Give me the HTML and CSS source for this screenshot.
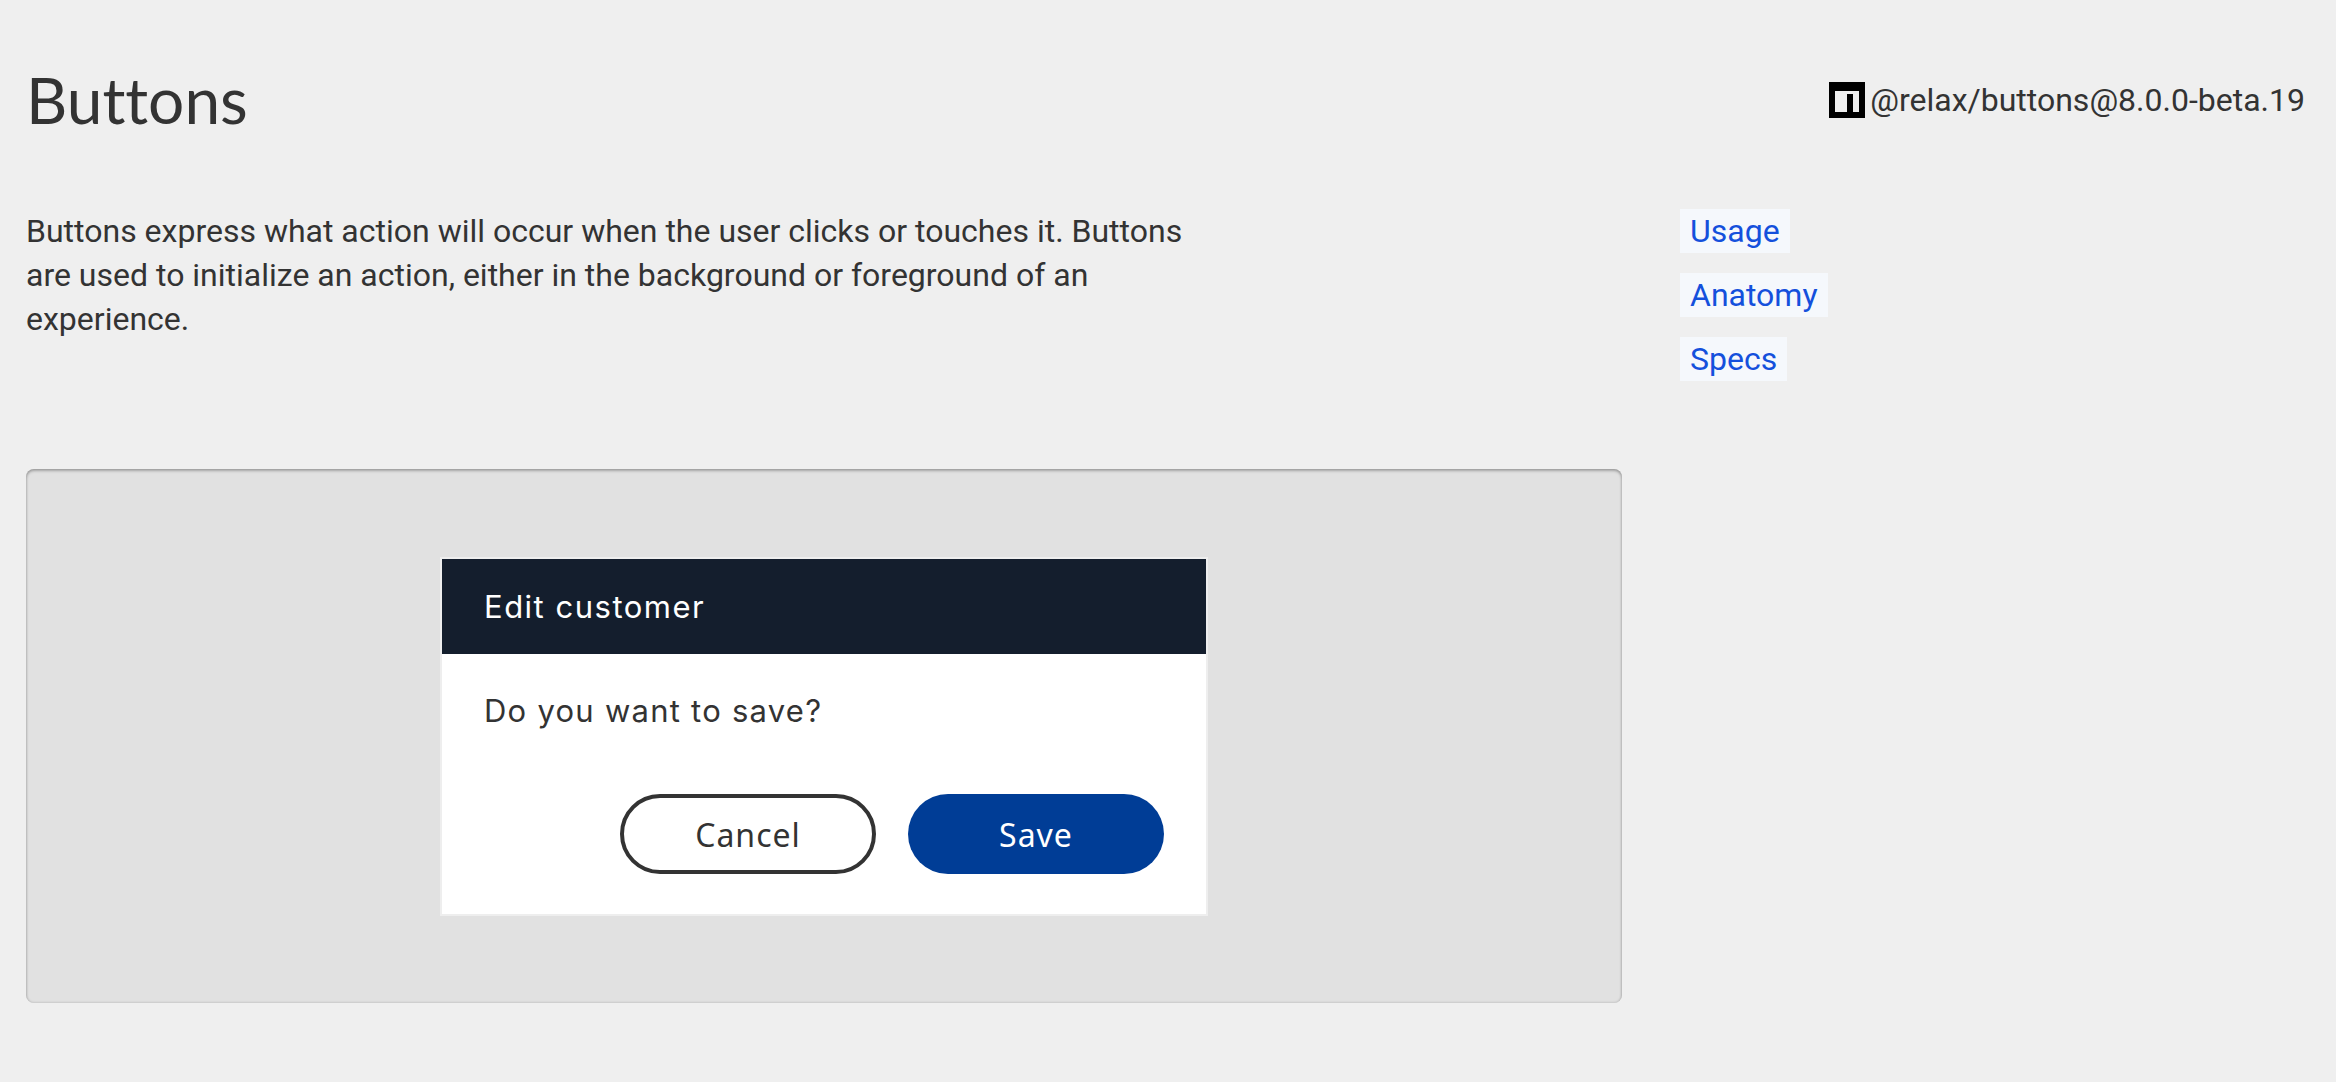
FILE: index.html
```html
<!DOCTYPE html>
<html lang="en">
<head>
<meta charset="utf-8">
<title>Buttons</title>
<link rel="stylesheet" href="styles.css">
</head>
<body>
<div class="page">
  <header class="head">
    <h1 class="title">Buttons</h1>
    <div class="pkg">
      <svg class="npm" width="36" height="36" viewBox="0 0 36 36" aria-hidden="true"><path fill-rule="evenodd" d="M0 0H36V36H0ZM6 9V30H18V12H24V30H30V9Z"/></svg>
      <span>@relax/buttons@8.0.0-beta.19</span>
    </div>
  </header>
  <div class="content">
    <main class="main">
      <p class="lead">Buttons express what action will occur when the user clicks or touches it. Buttons are used to initialize an action, either in the background or foreground of an experience.</p>
      <section class="stage">
        <div class="dialog">
          <div class="dialog-head">Edit customer</div>
          <div class="dialog-body">
            <p class="question">Do you want to save?</p>
            <div class="actions">
              <button class="btn btn-secondary">Cancel</button>
              <button class="btn btn-primary">Save</button>
            </div>
          </div>
        </div>
      </section>
    </main>
    <nav class="toc">
      <a class="toc-link" href="#usage">Usage</a>
      <a class="toc-link" href="#anatomy">Anatomy</a>
      <a class="toc-link" href="#specs">Specs</a>
    </nav>
  </div>
</div>
</body>
</html>
```
FILE: styles.css
```css
* { box-sizing: border-box; }
html, body { margin: 0; background: #efefef; }
body { font-family: Roboto, sans-serif; color: #333; }
.page { padding: 58px 31px 0 26px; }
.head { display: flex; justify-content: space-between; align-items: center; height: 84px; }
.title { margin: 0; font: 400 64px/80px Lato, sans-serif; font-variant-ligatures: none; color: #333; }
.pkg { display: flex; align-items: center; gap: 5px; font-size: 32px; line-height: 44px; }
.npm { display: block; flex: none; }
.content { display: flex; margin-top: 67px; }
.main { width: 1596px; flex: none; }
.lead { margin: 0; max-width: 1170px; font-size: 32px; line-height: 44px; }
.stage {
  margin-top: 128px; height: 534px; background: #e1e1e1; border-radius: 8px;
  box-shadow: inset 0 2px 3px rgba(0,0,0,.25), inset 0 0 3px rgba(0,0,0,.2);
  display: flex; justify-content: center; padding-top: 88px;
}
.dialog { width: 768px; height: 359px; border: 2px solid #eee; background: #fff; }
.dialog-head {
  height: 95px; padding: 0 42px; display: flex; align-items: center; background: #141e2d; color: #fff;
  font: 400 31px "Inter", sans-serif; letter-spacing: 1.5px;
}
.dialog-body { padding: 0 42px; }
.question { margin: 0; padding-top: 35px; font: 400 31px/44px "Inter", sans-serif; letter-spacing: 1.25px; color: #333; }
.actions { display: flex; justify-content: flex-end; gap: 32px; margin-top: 61px; }
.btn { width: 256px; height: 80px; border-radius: 40px; font: 400 32px "Noto Sans", sans-serif; letter-spacing: 1px; padding: 0; }
.btn-secondary { background: #fff; border: 4px solid #333; color: #333; }
.btn-primary { background: #003d96; border: 0; color: #fff; }
.toc { margin-left: 58px; display: flex; flex-direction: column; align-items: flex-start; gap: 20px; }
.toc-link { height: 44px; padding: 0 10px; background: #f5f8fc; color: #1450dc; font-size: 32px; line-height: 44px; text-decoration: none; }
```
